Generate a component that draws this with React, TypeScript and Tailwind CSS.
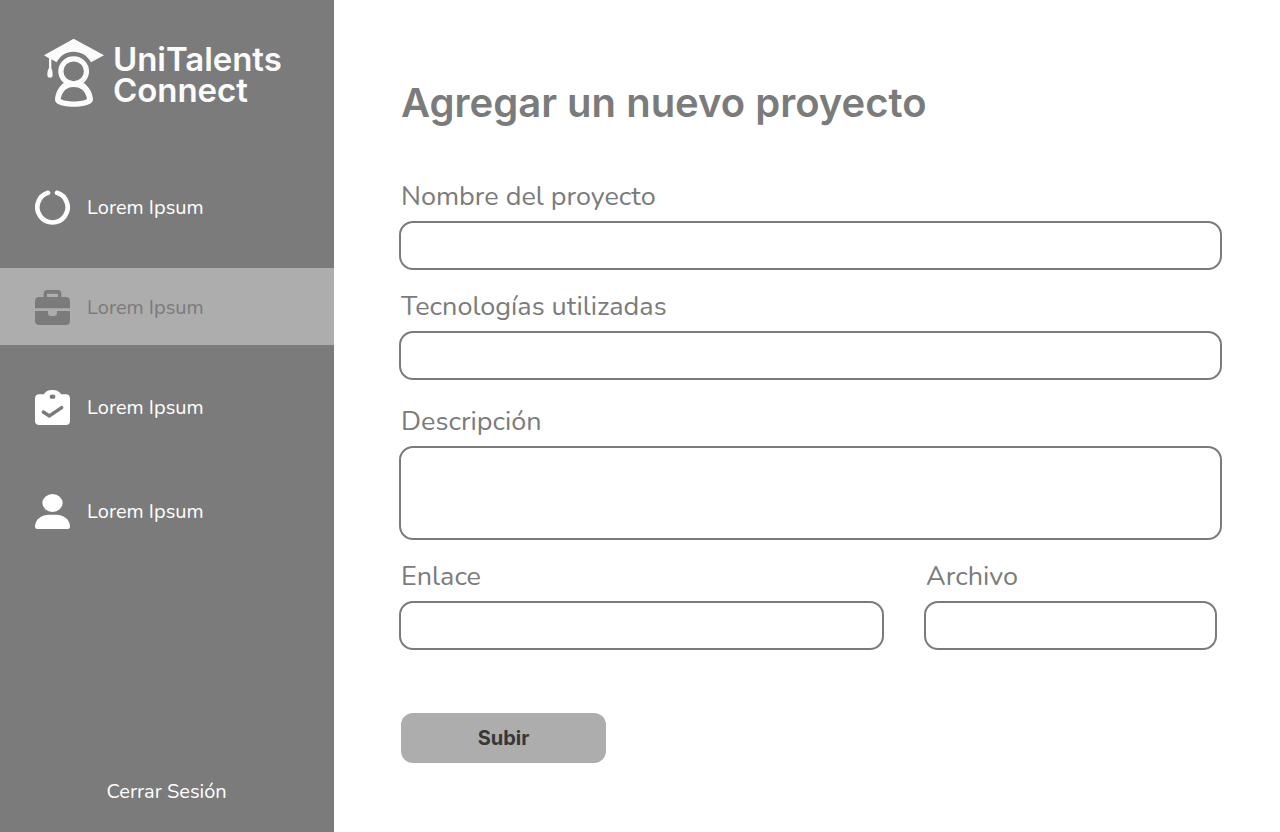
import React from "react";

const Logo = () => (
  <svg className="h-[71px] w-16 shrink-0" viewBox="36 36 192 213" fill="#fbfbfb">
    <path d="M42 91 L131 41 L222 91 L183 112 C171 90 152 80 131 80 C108 80 90 92 80 112 L64 103 V129 Q68 135 68 150 Q68 158 60 158 Q52 158 52 150 Q52 135 57 129 V100 Z" />
    <ellipse cx="131" cy="139" rx="38.500" ry="37.500" fill="none" stroke="#fbfbfb" strokeWidth="15.500" />
    <path
      fillRule="evenodd"
      d="M75 222 C77 200 88 183 102 173 L112 178 H150 L160 173 C175 183 187 200 189 222 Q190 229 184 233 C165 249 97 249 79 233 Q74 229 75 222 Z M92 221 C98 195 113 186 131 186 S166 195 171 221 C160 232 103 232 92 221 Z"
    />
  </svg>
);

const Ring = () => (
  <svg className="size-[35px] shrink-0" viewBox="0 0 105 105" fill="none" stroke="#fff" strokeWidth="14" strokeLinecap="round">
    <path d="M39 8.500 A45.500 45.500 0 1 0 66 8.500" />
  </svg>
);

const Briefcase = () => (
  <svg className="size-[35px] shrink-0" viewBox="0 0 105 105" fill="#7b7b7b">
    <path fillRule="evenodd" d="M26 21 V11 Q26 0 37 0 H68 Q79 0 79 11 V21 H92 Q105 21 105 34 V55 H0 V34 Q0 21 13 21 Z M36 21 H69 V11 H36 Z" />
    <path d="M0 63 H39 V69 Q39 78 48 78 H57 Q66 78 66 69 V63 H105 V92 Q105 105 92 105 H13 Q0 105 0 92 Z" />
  </svg>
);

const Clipboard = () => (
  <svg className="size-[35px] shrink-0" viewBox="0 0 105 105" fill="none">
    <path fill="#fff" d="M13 13 H27 C34 -4 71 -4 78 13 H92 Q105 13 105 26 V92 Q105 105 92 105 H13 Q0 105 0 92 V26 Q0 13 13 13 Z" />
    <ellipse cx="52.500" cy="20" rx="8.500" ry="6.500" fill="#7b7b7b" />
    <path d="M25 66 L43 78 L80 53" stroke="#7b7b7b" strokeWidth="10.500" strokeLinecap="round" />
  </svg>
);

const User = () => (
  <svg className="size-[35px] shrink-0" viewBox="0 0 105 105" fill="#fff">
    <ellipse cx="52.500" cy="27" rx="30.500" ry="27" />
    <path d="M0 98 C0 75 20 62 43 62 H62 C85 62 105 75 105 98 Q105 105 98 105 H7 Q0 105 0 98 Z" />
  </svg>
);

const NavItem = ({ icon, className }: { icon: React.ReactNode; className: string }) => (
  <a className={`flex h-[77px] items-center gap-[17px] pt-0.5 pl-[35px] text-[20px] ${className}`}>
    {icon}
    <span>Lorem Ipsum</span>
  </a>
);

const Field = ({ label, id, className, box }: { label: string; id: string; className: string; box: string }) => (
  <div className={`flex flex-col ${className}`}>
    <label htmlFor={id} className="mb-[7px] pl-0.5 text-[27px] leading-[34px] text-[#7b7b7b]">
      {label}
    </label>
    <div id={id} className={`rounded-[14px] border-2 border-[#7b7b7b] bg-white ${box}`} />
  </div>
);

export default function App() {
  return (
    <div className="flex h-[832px] w-[1280px] overflow-hidden bg-white font-['Nunito','Lato',sans-serif]">
      <aside className="flex w-[334px] shrink-0 flex-col bg-[#7b7b7b] text-white">
        <div className="flex h-[168px] items-start gap-[7px] pt-[37px] pl-[42px]">
          <Logo />
          <div className="pt-[7px] font-['Inter',sans-serif] text-[33px] leading-[31px] font-semibold tracking-[-0.05px] text-[#fbfbfb]">
            UniTalents
            <br />
            Connect
          </div>
        </div>
        <nav className="flex flex-col">
          <NavItem icon={<Ring />} className="" />
          <NavItem icon={<Briefcase />} className="mt-[23px] bg-[#adadad] text-[#7b7b7b]" />
          <NavItem icon={<Clipboard />} className="mt-[23px]" />
          <NavItem icon={<User />} className="mt-[27px]" />
        </nav>
        <a className="mt-auto mb-[25px] pl-[106.500px] text-[20px] leading-[30px]">Cerrar Sesión</a>
      </aside>
      <main className="flex flex-col pt-[77px] pl-[65px]">
        <h1 className="pl-0.5 font-['Inter',sans-serif] text-[40px] leading-[52px] font-semibold text-[#7b7b7b]">
          Agregar un nuevo proyecto
        </h1>
        <Field id="nombre" label="Nombre del proyecto" className="mt-[51px] w-[823px]" box="h-[49px]" />
        <Field id="tecnologias" label="Tecnologías utilizadas" className="mt-[20px] w-[823px]" box="h-[49px]" />
        <Field id="descripcion" label="Descripción" className="mt-[25px] w-[823px]" box="h-[94px]" />
        <div className="mt-[20px] flex gap-10">
          <Field id="enlace" label="Enlace" className="w-[485px]" box="h-[49px]" />
          <Field id="archivo" label="Archivo" className="w-[293px]" box="h-[49px]" />
        </div>
        <button className="mt-[63px] ml-0.5 h-[50px] w-[205px] rounded-xl bg-[#adadad] font-['Inter',sans-serif] text-[20px] font-bold text-[#373737]">
          Subir
        </button>
      </main>
    </div>
  );
}
